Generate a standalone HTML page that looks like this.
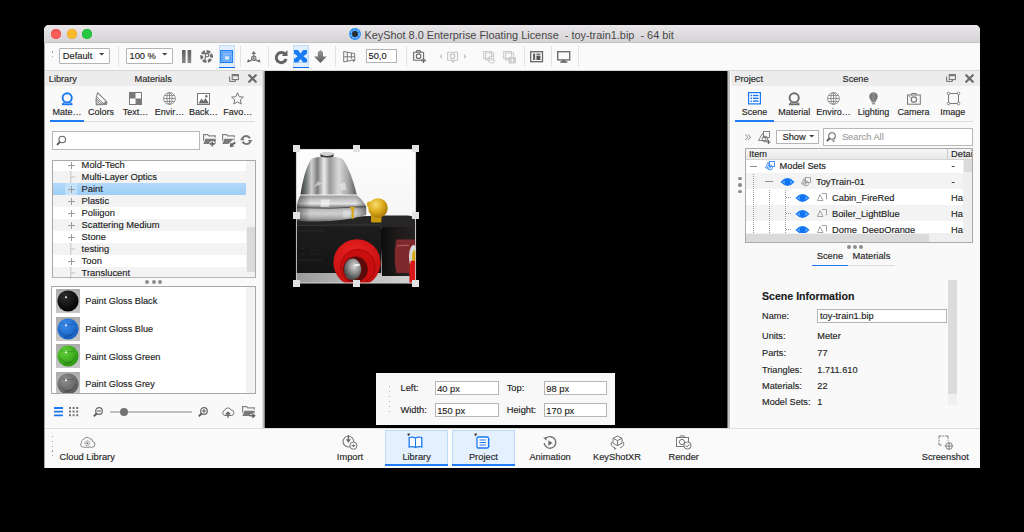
<!DOCTYPE html>
<html><head><meta charset="utf-8"><style>
*{box-sizing:border-box;margin:0;padding:0}
html,body{width:1024px;height:532px;background:#000;overflow:hidden;font-family:"Liberation Sans",sans-serif}
.a{position:absolute}
.t{position:absolute;white-space:nowrap;-webkit-text-stroke:0.15px currentColor}
svg{position:absolute;overflow:visible}
</style></head><body>
<div class="a" style="left:44px;top:25px;width:936px;height:443px;background:#f9f9f9;border-radius:5px 5px 0 0"></div>
<div class="a" style="left:44px;top:25px;width:936px;height:18px;background:linear-gradient(#e9e7e9,#d5d3d5);border-radius:5px 5px 0 0;border-bottom:1px solid #c3c1c3"></div>
<div class="a" style="left:50.5px;top:29.1px;width:10px;height:10px;background:#fc5c57;border-radius:50%;box-shadow:inset 0 0 0 0.5px #e0443e"></div>
<div class="a" style="left:66.6px;top:29.1px;width:10px;height:10px;background:#fdbc2e;border-radius:50%;box-shadow:inset 0 0 0 0.5px #dea123"></div>
<div class="a" style="left:82.3px;top:29.1px;width:10px;height:10px;background:#28c840;border-radius:50%;box-shadow:inset 0 0 0 0.5px #1aab29"></div>
<svg style="left:348.5px;top:28px;" width="12" height="12" viewBox="0 0 12 12"><circle cx="6" cy="6" r="5.9" fill="#1f87f2"/><circle cx="6" cy="6" r="4.1" fill="none" stroke="#7fc0ff" stroke-width="1.3" stroke-dasharray="2.4 1"/><circle cx="6" cy="6" r="2.9" fill="#2c2c2c"/></svg>
<div class="t" style="left:364.40px;top:29.77px;font-size:10.9px;line-height:10.9px;color:#474747;-webkit-text-stroke:0">KeyShot 8.0 Enterprise Floating License&nbsp; - toy-train1.bip&nbsp; - 64 bit</div>
<div class="a" style="left:44px;top:43px;width:936px;height:28px;background:#fafafa;border-bottom:1px solid #d8d8d8"></div>
<div class="a" style="left:51.8px;top:51.3px;width:1.3px;height:1.3px;background:#888;border-radius:50%"></div>
<div class="a" style="left:51.8px;top:56px;width:1.3px;height:1.3px;background:#888;border-radius:50%"></div>
<div class="a" style="left:59px;top:48.3px;width:50.8px;height:15.4px;background:#fff;border:1px solid #b4b4b4;border-radius:1px"></div>
<div class="t" style="left:62.80px;top:51.63px;font-size:9.3px;line-height:9.3px;color:#1e1e1e;">Default</div>
<svg style="left:99.3px;top:52.8px;" width="6" height="3" viewBox="0 0 6 3"><path d="M0 0h5.4L2.7 2.6z" fill="#444"/></svg>
<div class="a" style="left:118px;top:46px;width:1px;height:21px;background:#e3e3e3;"></div>
<div class="a" style="left:240px;top:46px;width:1px;height:21px;background:#e3e3e3;"></div>
<div class="a" style="left:267.6px;top:46px;width:1px;height:21px;background:#e3e3e3;"></div>
<div class="a" style="left:334.5px;top:46px;width:1px;height:21px;background:#e3e3e3;"></div>
<div class="a" style="left:406px;top:46px;width:1px;height:21px;background:#e3e3e3;"></div>
<div class="a" style="left:523.6px;top:46px;width:1px;height:21px;background:#e3e3e3;"></div>
<div class="a" style="left:550.6px;top:46px;width:1px;height:21px;background:#e3e3e3;"></div>
<div class="a" style="left:577.6px;top:46px;width:1px;height:21px;background:#e3e3e3;"></div>
<div class="a" style="left:126.2px;top:48.3px;width:46.4px;height:15.4px;background:#fff;border:1px solid #b4b4b4;border-radius:1px"></div>
<div class="t" style="left:129.50px;top:51.63px;font-size:9.3px;line-height:9.3px;color:#1e1e1e;">100 %</div>
<svg style="left:162.1px;top:52.8px;" width="6" height="3" viewBox="0 0 6 3"><path d="M0 0h5.4L2.7 2.6z" fill="#444"/></svg>
<svg style="left:182px;top:49.9px;" width="10" height="13.1" viewBox="0 0 10 13.1"><defs><linearGradient id="pg" x1="0" x2="0" y1="0" y2="1"><stop offset="0" stop-color="#5e5e5e"/><stop offset="1" stop-color="#8a8a8a"/></linearGradient></defs><rect x="0" y="0" width="3.6" height="13.1" fill="url(#pg)"/><rect x="5.6" y="0" width="3.6" height="13.1" fill="url(#pg)"/></svg>
<svg style="left:200.2px;top:49.8px;" width="13" height="13" viewBox="0 0 13 13"><g transform="translate(6.5 6.5)"><path d="M0 -6.4 A6.4 6.4 0 0 1 4.6 -4.45 L2.2 -2.6 A3.6 3.6 0 0 0 0 -3.6z" fill="#707070" transform="rotate(0)"/><path d="M0 -6.4 A6.4 6.4 0 0 1 4.6 -4.45 L2.2 -2.6 A3.6 3.6 0 0 0 0 -3.6z" fill="#707070" transform="rotate(60)"/><path d="M0 -6.4 A6.4 6.4 0 0 1 4.6 -4.45 L2.2 -2.6 A3.6 3.6 0 0 0 0 -3.6z" fill="#707070" transform="rotate(120)"/><path d="M0 -6.4 A6.4 6.4 0 0 1 4.6 -4.45 L2.2 -2.6 A3.6 3.6 0 0 0 0 -3.6z" fill="#707070" transform="rotate(180)"/><path d="M0 -6.4 A6.4 6.4 0 0 1 4.6 -4.45 L2.2 -2.6 A3.6 3.6 0 0 0 0 -3.6z" fill="#707070" transform="rotate(240)"/><path d="M0 -6.4 A6.4 6.4 0 0 1 4.6 -4.45 L2.2 -2.6 A3.6 3.6 0 0 0 0 -3.6z" fill="#707070" transform="rotate(300)"/></g><path d="M5.3 9.6V3.6h1.9a1.55 1.55 0 0 1 0 3.1H5.3" fill="none" stroke="#6a6a6a" stroke-width="1.1"/></svg>
<div class="a" style="left:218.7px;top:45.2px;width:16.4px;height:22.8px;background:#e2eefd;border:1px solid #c6ddfb;border-bottom:none"></div>
<div class="a" style="left:218.7px;top:66.8px;width:16.4px;height:1.4px;background:#0a6ef5;"></div>
<svg style="left:220px;top:49.9px;" width="13.1" height="13.1" viewBox="0 0 13.1 13.1"><rect x="0.6" y="0.6" width="11.9" height="11.9" fill="#84bafa" stroke="#1f80f6" stroke-width="1.1"/><path d="M2.3 2.3h8.5v8.5h-8.5z" fill="none" stroke="#2e88f6" stroke-width="0.8" stroke-dasharray="0.9 0.7"/><path d="M1.5 4.5l2 2M9.5 4.5l-2 2M1.5 10l2-2M11 10l-2-2" stroke="#2e88f6" stroke-width="0.6"/><rect x="4.6" y="5.9" width="4.8" height="4.2" rx="0.8" fill="#dcebfd" stroke="#4a98f7" stroke-width="0.6"/></svg>
<svg style="left:246.8px;top:50.5px;" width="13.5" height="12" viewBox="0 0 13.5 12"><g stroke="#777" stroke-width="1.1" fill="none"><path d="M6.75 2v5.5M6.75 7.5l-4.6 3M6.75 7.5l4.6 3"/><circle cx="6.75" cy="7.3" r="2.2"/></g><path d="M6.75 0l2.3 3h-4.6z M0 11.6l1-3.6 2.6 2.6z M13.5 11.6l-1-3.6-2.6 2.6z" fill="#6e6e6e"/></svg>
<svg style="left:274.5px;top:50.5px;" width="12.5" height="12.5" viewBox="0 0 12.5 12.5"><path d="M10.2 3.5A5 5 0 1 0 11.1 8" fill="none" stroke="#656565" stroke-width="3"/><path d="M6.8 5h5.7V-0.7z" fill="#656565"/></svg>
<div class="a" style="left:292.8px;top:45.2px;width:16.2px;height:22.8px;background:#e2eefd;border:1px solid #c6ddfb;border-bottom:none"></div>
<div class="a" style="left:292.8px;top:66.8px;width:16.2px;height:1.4px;background:#0a6ef5;"></div>
<svg style="left:294px;top:49.7px;" width="13.1" height="12.5" viewBox="0 0 13.1 12.5"><path d="M0 0H13.1V12.5H0z M6.55 1.2L4.3 0H8.8z" fill="#1a7bf6"/><path d="M3.9 0L6.55 3.6 9.2 0z M3.9 12.5L6.55 8.9 9.2 12.5z M0 3.6L3.7 6.25 0 8.9z M13.1 3.6L9.4 6.25 13.1 8.9z" fill="#e2eefd"/></svg>
<svg style="left:313.9px;top:50px;" width="12.8" height="13" viewBox="0 0 12.8 13"><defs><linearGradient id="dag" x1="0" x2="0" y1="0" y2="1"><stop offset="0" stop-color="#9a9a9a"/><stop offset="1" stop-color="#5c5c5c"/></linearGradient></defs><path d="M6.4 0L9 2.2V6.6H12.8L6.4 13 0 6.6H3.8V2.2z" fill="url(#dag)"/></svg>
<svg style="left:342.8px;top:50.5px;" width="14" height="12" viewBox="0 0 14 12"><g fill="none" stroke="#7a7a7a" stroke-width="1"><path d="M0.7 0.5L11.7 2.6V8.8L0.7 10.9z"/><path d="M4.3 1.2V10.2M8.4 2V9.4M0.7 5.8H11.7"/></g><path d="M8 8.2h5.6L10.8 11.4z" fill="#666" stroke="#fafafa" stroke-width="0.7"/></svg>
<div class="a" style="left:366.2px;top:49.3px;width:31.3px;height:14px;background:#fff;border:1px solid #b4b4b4"></div>
<div class="t" style="left:368.50px;top:52.13px;font-size:9.3px;line-height:9.3px;color:#1e1e1e;">50,0</div>
<svg style="left:412.5px;top:50px;" width="13.5" height="13" viewBox="0 0 13.5 13"><g fill="none" stroke="#6a6a6a" stroke-width="1.1"><rect x="0.6" y="2.2" width="10" height="8" rx="0.5"/><circle cx="5.6" cy="6.2" r="2.3"/><path d="M3 2.2l1-1.6h3l1 1.6"/></g><path d="M10.5 8v5M8 10.5h5" stroke="#6a6a6a" stroke-width="1.4"/></svg>
<svg style="left:437.5px;top:50px;" width="30" height="13" viewBox="0 0 30 13"><path d="M4 4l-2.6 2.5L4 9z M26 4l2.6 2.5L26 9z" fill="#c8c8c8"/><g fill="none" stroke="#c6c6c6" stroke-width="1.1"><rect x="9.6" y="2.2" width="10" height="8" rx="0.5"/><circle cx="14.6" cy="6.2" r="2.3"/></g><path d="M12.5 10.5h5l-2.5 2.5z" fill="#c8c8c8"/></svg>
<svg style="left:483px;top:50px;" width="14" height="14" viewBox="0 0 14 14"><g fill="none" stroke="#cdcdcd" stroke-width="1.1"><rect x="0.6" y="1.5" width="8" height="7"/><rect x="2.6" y="3" width="8" height="7"/><path d="M12 10a3.5 3.5 0 1 1-1-3"/></g></svg>
<svg style="left:502.8px;top:50px;" width="14" height="14" viewBox="0 0 14 14"><g fill="none" stroke="#cdcdcd" stroke-width="1.1"><rect x="0.6" y="1.5" width="8" height="7"/><rect x="2.6" y="3" width="8" height="7"/></g><rect x="5.5" y="7" width="7.5" height="6.5" fill="#cdcdcd"/><rect x="8.6" y="9" width="1.4" height="3" fill="#f7f7f7"/></svg>
<svg style="left:530px;top:50.5px;" width="13.2" height="11.5" viewBox="0 0 13.2 11.5"><rect x="0.7" y="0.7" width="11.8" height="10" fill="none" stroke="#666" stroke-width="1.3"/><rect x="3" y="2.5" width="2.2" height="6.5" fill="#666"/><rect x="6.4" y="2.5" width="4" height="2" fill="#777"/><rect x="6.4" y="5" width="4" height="4" fill="#555"/></svg>
<svg style="left:557px;top:50.5px;" width="13.5" height="12" viewBox="0 0 13.5 12"><rect x="0.7" y="0.7" width="12" height="8.2" fill="none" stroke="#666" stroke-width="1.3"/><rect x="5.2" y="9" width="3" height="1.5" fill="#666"/><rect x="3.3" y="10.3" width="7" height="1.4" fill="#555"/></svg>
<div class="a" style="left:44px;top:71px;width:221px;height:357px;background:#f9f9f9;"></div>
<div class="a" style="left:262px;top:71px;width:1px;height:357px;background:#dcdcdc;"></div>
<div class="a" style="left:263px;top:71px;width:1px;height:357px;background:#bdbdbd;"></div>
<div class="a" style="left:264px;top:71px;width:1px;height:357px;background:#8a8a8a;"></div>
<div class="a" style="left:44px;top:71px;width:218px;height:15px;background:#ececec;"></div>
<div class="t" style="left:48.80px;top:74.61px;font-size:9.2px;line-height:9.2px;color:#2a2a2a;">Library</div>
<div class="t" style="left:134.60px;top:74.61px;font-size:9.2px;line-height:9.2px;color:#2a2a2a;">Materials</div>
<svg style="left:229px;top:73.7px;" width="10" height="8" viewBox="0 0 10 8"><g fill="none" stroke="#6e6e6e" stroke-width="1"><rect x="3.2" y="0.6" width="6.2" height="5"/><path d="M0.6 2.6V7.4H6.4V5.6"/></g><rect x="3.2" y="0.6" width="6.2" height="1.6" fill="#777"/></svg>
<svg style="left:247.5px;top:73.89999999999999px;" width="9" height="9" viewBox="0 0 9 9"><path d="M1.2 1.2l6.6 6.6M7.8 1.2l-6.6 6.6" stroke="#6a6a6a" stroke-width="2.2" stroke-linecap="round"/></svg>
<svg style="left:60.5px;top:92px;" width="13" height="13" viewBox="0 0 13 13"><circle cx="6.2" cy="5.8" r="4.6" fill="none" stroke="#1a78f2" stroke-width="1.9"/><path d="M1 12.3h10.5" stroke="#1a78f2" stroke-width="1.8"/><path d="M3 10.5l-1 1.8M9.5 10.5l1 1.8" stroke="#1a78f2" stroke-width="1.5"/></svg>
<svg style="left:95px;top:91.8px;" width="13" height="13.5" viewBox="0 0 13 13.5"><path d="M2.7 0.4L11.8 9.6V12.4L1.2 13Q0 6 2.7 0.4z" fill="#8a8a8a"/><path d="M3.1 1.9L10.4 9.2 8.6 11 1.3 3.7z" fill="#fff"/><path d="M1.1 5.2L7.5 11.2M0.9 7.6L5.8 11.6M0.9 9.9L4 12.2" stroke="#fff" stroke-width="0.9"/><path d="M2.7 0.4L11.8 9.6V12.4L1.2 13Q0 6 2.7 0.4z" fill="none" stroke="#777" stroke-width="0.8"/></svg>
<svg style="left:129px;top:92px;" width="13" height="13" viewBox="0 0 13 13"><rect x="0.5" y="0.5" width="12" height="12" fill="#fff" stroke="#7a7a7a" stroke-width="1"/><rect x="0.5" y="0.5" width="6" height="6" fill="#7a7a7a"/><rect x="6.5" y="6.5" width="6" height="6" fill="#7a7a7a"/></svg>
<svg style="left:163px;top:92px;" width="13" height="13" viewBox="0 0 13 13"><g fill="none" stroke="#8a8a8a" stroke-width="0.9"><circle cx="6.5" cy="6.5" r="5.9"/><ellipse cx="6.5" cy="6.5" rx="2.6" ry="5.9"/><path d="M6.5 0.6v11.8M0.6 6.5h11.8M1.5 3.5h10M1.5 9.5h10"/></g></svg>
<svg style="left:197px;top:92.5px;" width="13" height="12" viewBox="0 0 13 12"><rect x="0.5" y="0.5" width="12" height="11" fill="#fff" stroke="#777" stroke-width="1"/><path d="M1.5 10.5L4.5 5.5l2 2.5 2-3 3.5 5.5z" fill="#6a6a6a"/><circle cx="9.3" cy="3.3" r="1.2" fill="#6a6a6a"/></svg>
<svg style="left:231px;top:91.5px;" width="13" height="13" viewBox="0 0 13 13"><path d="M6.5 0.8l1.75 3.9 4.15 0.4-3.1 2.8 0.9 4.1-3.7-2.15-3.7 2.15 0.9-4.1-3.1-2.8 4.15-0.4z" fill="none" stroke="#777" stroke-width="1"/></svg>
<div class="t" style="left:7.00px;width:120px;text-align:center;top:107.88px;font-size:9px;line-height:9px;color:#262626;">Mate…</div>
<div class="t" style="left:41.00px;width:120px;text-align:center;top:107.88px;font-size:9px;line-height:9px;color:#262626;">Colors</div>
<div class="t" style="left:75.50px;width:120px;text-align:center;top:107.88px;font-size:9px;line-height:9px;color:#262626;">Text…</div>
<div class="t" style="left:109.50px;width:120px;text-align:center;top:107.88px;font-size:9px;line-height:9px;color:#262626;">Envir…</div>
<div class="t" style="left:143.60px;width:120px;text-align:center;top:107.88px;font-size:9px;line-height:9px;color:#262626;">Back…</div>
<div class="t" style="left:177.80px;width:120px;text-align:center;top:107.88px;font-size:9px;line-height:9px;color:#262626;">Favo…</div>
<div class="a" style="left:50px;top:120.6px;width:205px;height:1px;background:#dcdcdc;"></div>
<div class="a" style="left:50px;top:120.1px;width:34.2px;height:2px;background:#1f7cf5;"></div>
<div class="a" style="left:52.2px;top:131px;width:147.5px;height:18.5px;background:#fff;border:1px solid #b8b8b8"></div>
<svg style="left:55.5px;top:134.5px;" width="11" height="11" viewBox="0 0 11 11"><circle cx="6.2" cy="4.5" r="3.3" fill="none" stroke="#666" stroke-width="1.1"/><path d="M4 6.8L1 9.8" stroke="#555" stroke-width="1.8"/></svg>
<svg style="left:203.3px;top:133.5px;" width="13" height="13" viewBox="0 0 13 13"><path d="M0.6 6.8V0.6h4.1l1 1.3h6.6v1.6" stroke="#858585" stroke-width="1.2" fill="none"/><path d="M2.4 4.7h10.3v5.4H0.4z" fill="#7a7a7a"/><path d="M9.3 7v5.8M6.4 9.9h5.8" stroke="#fafafa" stroke-width="3.4"/><path d="M9.3 7.4v5.2M6.7 9.9h5.2" stroke="#6a6a6a" stroke-width="1.7"/></svg>
<svg style="left:222px;top:133.5px;" width="13" height="13" viewBox="0 0 13 13"><path d="M0.6 6.8V0.6h4.1l1 1.3h6.6v1.6" stroke="#858585" stroke-width="1.2" fill="none"/><path d="M2.4 4.7h10.3v5.4H0.4z" fill="#7a7a7a"/><path d="M12.6 6.5L8.6 10.2 12 12.8" stroke="#fafafa" stroke-width="3.4" fill="none"/><path d="M12.8 7.4L9.8 9.6l-1.5-1.2-0.6 4.8 4.6-0.6-1.4-1.2 2.9-2.2z" fill="#6a6a6a"/></svg>
<svg style="left:240.2px;top:135px;" width="12.5" height="10.2" viewBox="0 0 12.5 10.2"><path d="M10 3.4A4.4 4.4 0 0 0 2.3 3.2M2.5 6.8A4.4 4.4 0 0 0 10.2 7" fill="none" stroke="#747474" stroke-width="1.9"/><path d="M0 5.3L2.2 2.1 4.6 5.3z M12.5 4.9L10.3 8.1 7.9 4.9z" fill="#747474"/></svg>
<div class="a" style="left:51.5px;top:159.5px;width:204px;height:118.5px;background:#fff;border:1px solid #a9a9a9"></div>
<div class="a" style="left:52.5px;top:160.5px;width:193px;height:10.5px;background:#ffffff;"></div>
<svg style="left:67.5px;top:161.5px;" width="7" height="7" viewBox="0 0 7 7"><path d="M3.5 0v7M0 3.5h7" stroke="#9c9c9c" stroke-width="1"/></svg>
<div class="t" style="left:81.60px;top:160.59px;font-size:9.35px;line-height:9.35px;color:#1e1e1e;">Mold-Tech</div>
<div class="a" style="left:52.5px;top:171px;width:193px;height:12px;background:#f3f3f3;"></div>
<svg style="left:70.2px;top:171px;" width="6" height="12" viewBox="0 0 6 12"><path d="M0.8 0v12M0.8 6h4.5" stroke="#c4c4c4" stroke-width="1"/></svg>
<div class="t" style="left:81.60px;top:172.59px;font-size:9.35px;line-height:9.35px;color:#1e1e1e;">Multi-Layer Optics</div>
<div class="a" style="left:52.5px;top:183px;width:193px;height:12px;background:linear-gradient(#b3d9fa,#9fcdf6);"></div>
<div class="a" style="left:64.5px;top:183px;width:12px;height:12px;background:#c3e1fb;"></div>
<svg style="left:67.5px;top:185.5px;" width="7" height="7" viewBox="0 0 7 7"><path d="M3.5 0v7M0 3.5h7" stroke="#9c9c9c" stroke-width="1"/></svg>
<div class="t" style="left:81.60px;top:184.59px;font-size:9.35px;line-height:9.35px;color:#1e1e1e;">Paint</div>
<div class="a" style="left:52.5px;top:195px;width:193px;height:12px;background:#f3f3f3;"></div>
<svg style="left:67.5px;top:197.5px;" width="7" height="7" viewBox="0 0 7 7"><path d="M3.5 0v7M0 3.5h7" stroke="#9c9c9c" stroke-width="1"/></svg>
<div class="t" style="left:81.60px;top:196.59px;font-size:9.35px;line-height:9.35px;color:#1e1e1e;">Plastic</div>
<div class="a" style="left:52.5px;top:207px;width:193px;height:12px;background:#ffffff;"></div>
<svg style="left:67.5px;top:209.5px;" width="7" height="7" viewBox="0 0 7 7"><path d="M3.5 0v7M0 3.5h7" stroke="#9c9c9c" stroke-width="1"/></svg>
<div class="t" style="left:81.60px;top:208.59px;font-size:9.35px;line-height:9.35px;color:#1e1e1e;">Poliigon</div>
<div class="a" style="left:52.5px;top:219px;width:193px;height:12px;background:#f3f3f3;"></div>
<svg style="left:67.5px;top:221.5px;" width="7" height="7" viewBox="0 0 7 7"><path d="M3.5 0v7M0 3.5h7" stroke="#9c9c9c" stroke-width="1"/></svg>
<div class="t" style="left:81.60px;top:220.59px;font-size:9.35px;line-height:9.35px;color:#1e1e1e;">Scattering Medium</div>
<div class="a" style="left:52.5px;top:231px;width:193px;height:12px;background:#ffffff;"></div>
<svg style="left:67.5px;top:233.5px;" width="7" height="7" viewBox="0 0 7 7"><path d="M3.5 0v7M0 3.5h7" stroke="#9c9c9c" stroke-width="1"/></svg>
<div class="t" style="left:81.60px;top:232.59px;font-size:9.35px;line-height:9.35px;color:#1e1e1e;">Stone</div>
<div class="a" style="left:52.5px;top:243px;width:193px;height:12px;background:#f3f3f3;"></div>
<svg style="left:70.2px;top:243px;" width="6" height="12" viewBox="0 0 6 12"><path d="M0.8 0v12M0.8 6h4.5" stroke="#c4c4c4" stroke-width="1"/></svg>
<div class="t" style="left:81.60px;top:244.59px;font-size:9.35px;line-height:9.35px;color:#1e1e1e;">testing</div>
<div class="a" style="left:52.5px;top:255px;width:193px;height:12px;background:#ffffff;"></div>
<svg style="left:67.5px;top:257.5px;" width="7" height="7" viewBox="0 0 7 7"><path d="M3.5 0v7M0 3.5h7" stroke="#9c9c9c" stroke-width="1"/></svg>
<div class="t" style="left:81.60px;top:256.59px;font-size:9.35px;line-height:9.35px;color:#1e1e1e;">Toon</div>
<div class="a" style="left:52.5px;top:267px;width:193px;height:10.5px;background:#f3f3f3;"></div>
<svg style="left:70.2px;top:267px;" width="6" height="12" viewBox="0 0 6 12"><path d="M0.8 0v12M0.8 6h4.5" stroke="#c4c4c4" stroke-width="1"/></svg>
<div class="t" style="left:81.60px;top:268.59px;font-size:9.35px;line-height:9.35px;color:#1e1e1e;">Translucent</div>
<div class="a" style="left:245.6px;top:160.5px;width:9px;height:117px;background:#f2f2f2;"></div>
<div class="a" style="left:246.5px;top:227px;width:8px;height:45.3px;background:#dadada;"></div>
<div class="a" style="left:51.5px;top:277px;width:204px;height:1.2px;background:#b4b4b4;"></div>
<div class="a" style="left:145.4px;top:280.4px;width:4px;height:4px;background:#8e8e8e;border-radius:50%"></div>
<div class="a" style="left:151.6px;top:280.4px;width:4px;height:4px;background:#8e8e8e;border-radius:50%"></div>
<div class="a" style="left:157.79999999999998px;top:280.4px;width:4px;height:4px;background:#8e8e8e;border-radius:50%"></div>
<div class="a" style="left:51px;top:286.2px;width:204.6px;height:107.5px;background:#fff;border:1px solid #a9a9a9"></div>
<div class="a" style="left:246px;top:287.2px;width:9px;height:105.5px;background:#f2f2f2;"></div>
<svg style="left:56px;top:288.9px;" width="24" height="24" viewBox="0 0 24 24"><defs><radialGradient id="sg0" cx="0.35" cy="0.3" r="0.7"><stop offset="0" stop-color="#2e2e2e"/><stop offset="1" stop-color="#050505"/></radialGradient><linearGradient id="bg0" x1="0" x2="0" y1="0" y2="1"><stop offset="0" stop-color="#ababab"/><stop offset="1" stop-color="#c8c8c8"/></linearGradient></defs><rect width="24" height="24" fill="url(#bg0)"/><circle cx="12" cy="12" r="10.6" fill="url(#sg0)"/><path d="M3.5 13q4 7 12 5M8 20q8 0 12-8M5 6q5 3 13 1" stroke="#000" stroke-width="0.8" fill="none" opacity="0.25"/><circle cx="10" cy="8.3" r="1" fill="#fff"/></svg>
<div class="t" style="left:85.30px;top:297.21px;font-size:9.2px;line-height:9.2px;color:#1e1e1e;">Paint Gloss Black</div>
<svg style="left:56px;top:316.59999999999997px;" width="24" height="24" viewBox="0 0 24 24"><defs><radialGradient id="sg1" cx="0.35" cy="0.3" r="0.7"><stop offset="0" stop-color="#3a8ae8"/><stop offset="1" stop-color="#1660c4"/></radialGradient><linearGradient id="bg1" x1="0" x2="0" y1="0" y2="1"><stop offset="0" stop-color="#ababab"/><stop offset="1" stop-color="#c8c8c8"/></linearGradient></defs><rect width="24" height="24" fill="url(#bg1)"/><circle cx="12" cy="12" r="10.6" fill="url(#sg1)"/><path d="M3.5 13q4 7 12 5M8 20q8 0 12-8M5 6q5 3 13 1" stroke="#000" stroke-width="0.8" fill="none" opacity="0.25"/><circle cx="10" cy="8.3" r="1" fill="#fff"/></svg>
<div class="t" style="left:85.30px;top:324.91px;font-size:9.2px;line-height:9.2px;color:#1e1e1e;">Paint Gloss Blue</div>
<svg style="left:56px;top:344.29999999999995px;" width="24" height="24" viewBox="0 0 24 24"><defs><radialGradient id="sg2" cx="0.35" cy="0.3" r="0.7"><stop offset="0" stop-color="#62d03a"/><stop offset="1" stop-color="#2e9a14"/></radialGradient><linearGradient id="bg2" x1="0" x2="0" y1="0" y2="1"><stop offset="0" stop-color="#ababab"/><stop offset="1" stop-color="#c8c8c8"/></linearGradient></defs><rect width="24" height="24" fill="url(#bg2)"/><circle cx="12" cy="12" r="10.6" fill="url(#sg2)"/><path d="M3.5 13q4 7 12 5M8 20q8 0 12-8M5 6q5 3 13 1" stroke="#000" stroke-width="0.8" fill="none" opacity="0.25"/><circle cx="10" cy="8.3" r="1" fill="#fff"/></svg>
<div class="t" style="left:85.30px;top:352.61px;font-size:9.2px;line-height:9.2px;color:#1e1e1e;">Paint Gloss Green</div>
<svg style="left:56px;top:372.0px;" width="24" height="24" viewBox="0 0 24 24"><defs><radialGradient id="sg3" cx="0.35" cy="0.3" r="0.7"><stop offset="0" stop-color="#8e8e8e"/><stop offset="1" stop-color="#5c5c5c"/></radialGradient><linearGradient id="bg3" x1="0" x2="0" y1="0" y2="1"><stop offset="0" stop-color="#ababab"/><stop offset="1" stop-color="#c8c8c8"/></linearGradient></defs><rect width="24" height="24" fill="url(#bg3)"/><circle cx="12" cy="12" r="10.6" fill="url(#sg3)"/><path d="M3.5 13q4 7 12 5M8 20q8 0 12-8M5 6q5 3 13 1" stroke="#000" stroke-width="0.8" fill="none" opacity="0.25"/><circle cx="10" cy="8.3" r="1" fill="#fff"/></svg>
<div class="t" style="left:85.30px;top:380.31px;font-size:9.2px;line-height:9.2px;color:#1e1e1e;">Paint Gloss Grey</div>
<div class="a" style="left:50px;top:393.7px;width:210px;height:8px;background:#f9f9f9;"></div>
<div class="a" style="left:51px;top:392.7px;width:204.6px;height:1px;background:#a9a9a9;"></div>
<svg style="left:53.5px;top:407px;" width="9" height="9.5" viewBox="0 0 9 9.5"><path d="M0 1h9M0 4.7h9M0 8.4h9" stroke="#1a78f2" stroke-width="1.8"/></svg>
<svg style="left:68.5px;top:407px;" width="10" height="10" viewBox="0 0 10 10"><g fill="#777"><rect x="0" y="0" width="2" height="2"/><rect x="0" y="3.6" width="2" height="2"/><rect x="0" y="7.2" width="2" height="2"/><rect x="3.6" y="0" width="2" height="2"/><rect x="3.6" y="3.6" width="2" height="2"/><rect x="3.6" y="7.2" width="2" height="2"/><rect x="7.2" y="0" width="2" height="2"/><rect x="7.2" y="3.6" width="2" height="2"/><rect x="7.2" y="7.2" width="2" height="2"/></g></svg>
<svg style="left:93.2px;top:407px;" width="10" height="10" viewBox="0 0 10 10"><circle cx="6" cy="4" r="3.3" fill="none" stroke="#666" stroke-width="1.2"/><path d="M4 4h4" stroke="#666" stroke-width="1.1"/><path d="M3.6 6.5L0.8 9.3" stroke="#555" stroke-width="1.8"/></svg>
<div class="a" style="left:109.5px;top:411.2px;width:82.5px;height:1.7px;background:#bfbfbf;"></div>
<div class="a" style="left:119.6px;top:407.7px;width:8.6px;height:8.6px;background:#737373;border-radius:50%"></div>
<svg style="left:198px;top:407px;" width="10" height="10" viewBox="0 0 10 10"><circle cx="6" cy="4" r="3.3" fill="none" stroke="#666" stroke-width="1.2"/><path d="M4 4h4M6 2v4" stroke="#666" stroke-width="1.1"/><path d="M3.6 6.5L0.8 9.3" stroke="#555" stroke-width="1.8"/></svg>
<svg style="left:221.5px;top:406.5px;" width="12" height="11" viewBox="0 0 12 11"><path d="M3 8.5A2.7 2.7 0 0 1 2.8 3.2 3.3 3.3 0 0 1 9 3 2.7 2.7 0 0 1 9.3 8.5z" fill="none" stroke="#777" stroke-width="1"/><path d="M6 10.8V5.5M3.8 7.5L6 5.2 8.2 7.5" stroke="#666" stroke-width="1.4" fill="none"/></svg>
<svg style="left:242px;top:405.8px;" width="13" height="13" viewBox="0 0 13 13"><path d="M0.6 6.8V0.6h4.1l1 1.3h6.6v1.6" stroke="#858585" stroke-width="1.2" fill="none"/><path d="M2.4 4.7h10.3v5.4H0.4z" fill="#7a7a7a"/><path d="M8 9.8h4.8M10.6 7.6l2.3 2.2-2.3 2.2" stroke="#fafafa" stroke-width="3" fill="none"/><path d="M7.5 9.8h4.6M10.4 7.8l2.2 2-2.2 2" stroke="#666" stroke-width="1.5" fill="none"/></svg>
<div class="a" style="left:265px;top:71px;width:462px;height:357px;background:#000;"></div>
<svg style="left:296px;top:148.5px;" width="120" height="134.3" viewBox="0 0 120 134.3"><defs>
<clipPath id="ic"><rect width="120" height="134.3"/></clipPath>
<linearGradient id="ibg" x1="0" x2="0" y1="0" y2="1"><stop offset="0" stop-color="#fdfdfd"/><stop offset="0.5" stop-color="#f6f6f6"/><stop offset="1" stop-color="#e8e8e8"/></linearGradient>
<linearGradient id="bell" x1="0" x2="1" y1="0" y2="0"><stop offset="0" stop-color="#3a3a3a"/><stop offset="0.1" stop-color="#6e7670"/><stop offset="0.2" stop-color="#d0d0d0"/><stop offset="0.3" stop-color="#7c7c7c"/><stop offset="0.42" stop-color="#ececec"/><stop offset="0.52" stop-color="#9a9a9a"/><stop offset="0.68" stop-color="#dadada"/><stop offset="0.85" stop-color="#a4a4a4"/><stop offset="1" stop-color="#5c5c5c"/></linearGradient>
<linearGradient id="brim" x1="0" x2="0" y1="0" y2="1"><stop offset="0" stop-color="#9a9a9a"/><stop offset="0.18" stop-color="#c8c8c8"/><stop offset="0.32" stop-color="#e4e4e4"/><stop offset="0.44" stop-color="#8a8a8a"/><stop offset="0.52" stop-color="#b8b8b8"/><stop offset="0.7" stop-color="#d0d0d0"/><stop offset="0.88" stop-color="#a8a8a8"/><stop offset="1" stop-color="#6a6a6a"/></linearGradient>
<linearGradient id="brimx" x1="0" x2="1" y1="0" y2="0"><stop offset="0" stop-color="#000" stop-opacity="0.45"/><stop offset="0.2" stop-color="#000" stop-opacity="0"/><stop offset="0.85" stop-color="#000" stop-opacity="0"/><stop offset="1" stop-color="#000" stop-opacity="0.4"/></linearGradient>
<linearGradient id="front" x1="0" x2="0" y1="0" y2="1"><stop offset="0" stop-color="#2a2a2a"/><stop offset="0.15" stop-color="#1c1c1c"/><stop offset="1" stop-color="#141414"/></linearGradient>
<linearGradient id="side" x1="0" x2="1" y1="0" y2="0"><stop offset="0" stop-color="#0c0c0c"/><stop offset="0.5" stop-color="#1e1a1a"/><stop offset="1" stop-color="#262222"/></linearGradient>
<linearGradient id="gnd" x1="0" x2="1" y1="0" y2="0"><stop offset="0" stop-color="#9a9a9a"/><stop offset="0.5" stop-color="#b8b8b8"/><stop offset="1" stop-color="#d4d4d4"/></linearGradient>
<radialGradient id="knob" cx="0.38" cy="0.32" r="0.7"><stop offset="0" stop-color="#f8dc70"/><stop offset="0.5" stop-color="#e0b020"/><stop offset="1" stop-color="#a87808"/></radialGradient>
<radialGradient id="hub" cx="0.6" cy="0.35" r="0.75"><stop offset="0" stop-color="#d8d8d8"/><stop offset="0.45" stop-color="#8c8c8c"/><stop offset="0.8" stop-color="#4a4a4a"/><stop offset="1" stop-color="#8a8a8a"/></radialGradient>
<radialGradient id="red1" cx="0.45" cy="0.35" r="0.7"><stop offset="0" stop-color="#ee2424"/><stop offset="1" stop-color="#c00c0c"/></radialGradient>
</defs>
<g clip-path="url(#ic)">
<rect width="120" height="134.3" fill="url(#ibg)"/>
<rect x="0" y="118" width="120" height="17" fill="url(#gnd)"/>
<path d="M84 70 L112 68.5 Q119 69 119.5 75 L119.5 127 L86 127 z" fill="url(#side)"/>
<path d="M0 71 L78 71 Q85 72 85 80 L85 124 L0 124 z" fill="url(#front)"/>
<path d="M0 70 L84 66.5 L112 66.5 Q119 67 119.5 72 L119.5 78 L84 78 L0 77z" fill="#262626"/>
<path d="M0 76.5 L84 75.5 Q86 76 86 80" stroke="#3a3a3a" stroke-width="0.8" fill="none"/>
<path d="M2 82h26M2 111h24" stroke="#2c2c2c" stroke-width="0.8"/>
<text x="1.5" y="105" font-family="Liberation Serif" font-size="15.5" fill="#0e0e0e" stroke="#262626" stroke-width="0.4">Bell</text>
<path d="M100.3 90.5 H120 V124 H100.3 Q97 107 100.3 90.5z" fill="#7e2a2c"/>
<path d="M101 97 q6 -1 12 -0.5" stroke="#c07070" stroke-width="1.2" fill="none" opacity="0.7"/>
<ellipse cx="117.5" cy="108" rx="4.5" ry="12" fill="#d8d8d8"/>
<ellipse cx="118.5" cy="108" rx="2.4" ry="7" fill="#d8a808"/>
<path d="M114.6 112 Q120 110 121 116 V135 H113.5 Q113 120 114.6 112z" fill="#d81818"/>
<ellipse cx="61" cy="113.8" rx="23.6" ry="23.6" fill="url(#red1)"/>
<ellipse cx="61.8" cy="117.6" rx="17.2" ry="17.2" fill="#c80e0e" stroke="#9a0808" stroke-width="0.8"/>
<ellipse cx="59.5" cy="120.3" rx="12.3" ry="12.8" fill="#5e0a0a"/>
<ellipse cx="56.6" cy="120.3" rx="8.7" ry="10.8" fill="url(#hub)"/>
<ellipse cx="61" cy="116" rx="3" ry="1" fill="#ffffff" opacity="0.9"/>
<path d="M14.5 11 Q16 7.6 31 7.4 Q46 7.6 47.5 11 Q55 22 60.8 45.5 L4.4 45.5 Q8 22 14.5 11z" fill="url(#bell)"/>
<path d="M18 38 l4 -6 l4 3z" fill="#f4f8ff" opacity="0.5"/>
<path d="M44 35 l5 -2 l2 8 l-6 0z" fill="#f8f8f8" opacity="0.45"/>
<path d="M24.5 4.5 Q31 2.5 37.5 4.5 V7.8 Q31 9.3 24.5 7.8z" fill="#3a3a3a"/>
<ellipse cx="31" cy="4.8" rx="6.3" ry="2.1" fill="#d4d4d4"/>
<path d="M4.4 46.5 L61 46.5 Q68 52 70.2 58 L70.2 66 Q50 72 20 72.5 Q5 72.5 0.5 71 L0.5 57 Q1.5 51 4.4 46.5z" fill="url(#brim)"/>
<path d="M4.4 46.5 L61 46.5 Q68 52 70.2 58 L70.2 66 Q50 72 20 72.5 Q5 72.5 0.5 71 L0.5 57 Q1.5 51 4.4 46.5z" fill="url(#brimx)"/>
<path d="M0.6 58.6 Q35 60.5 70 57.5" stroke="#4a4a4a" stroke-width="0.9" fill="none"/>
<path d="M25 50.5h9l-1 7.5h-8.5z" fill="#ffffff" opacity="0.55"/>
<path d="M47 61h7v7.5h-7z" fill="#ffffff" opacity="0.3"/>
<path d="M53.8 58h5.8l-1.8 3.2v8.5h-2.2v-8.5z" fill="#d8a818"/>
<rect x="75" y="63.5" width="10.4" height="10" rx="1.2" fill="#c8980e"/>
<circle cx="73.8" cy="55.6" r="3" fill="#dcae1a"/>
<circle cx="82" cy="59" r="9.8" fill="url(#knob)"/>
</g>
<rect x="0.4" y="0.4" width="119.2" height="133.5" fill="none" stroke="#d0d0d0" stroke-width="0.9"/>
</svg>
<div class="a" style="left:293.1px;top:145.1px;width:7px;height:7px;background:#e2e2e2;"></div>
<div class="a" style="left:293.1px;top:212.3px;width:7px;height:7px;background:#e2e2e2;"></div>
<div class="a" style="left:293.1px;top:279.5px;width:7px;height:7px;background:#e2e2e2;"></div>
<div class="a" style="left:352.8px;top:145.1px;width:7px;height:7px;background:#e2e2e2;"></div>
<div class="a" style="left:352.8px;top:279.5px;width:7px;height:7px;background:#e2e2e2;"></div>
<div class="a" style="left:412.2px;top:145.1px;width:7px;height:7px;background:#e2e2e2;"></div>
<div class="a" style="left:412.2px;top:212.3px;width:7px;height:7px;background:#e2e2e2;"></div>
<div class="a" style="left:412.2px;top:279.5px;width:7px;height:7px;background:#e2e2e2;"></div>
<div class="a" style="left:376px;top:373px;width:239px;height:52px;background:#f8f8f8;"></div>
<div class="a" style="left:388.9px;top:386.1px;width:1.2px;height:1.2px;background:#9c9c9c;border-radius:50%"></div>
<div class="a" style="left:388.9px;top:391.03000000000003px;width:1.2px;height:1.2px;background:#9c9c9c;border-radius:50%"></div>
<div class="a" style="left:388.9px;top:395.96000000000004px;width:1.2px;height:1.2px;background:#9c9c9c;border-radius:50%"></div>
<div class="a" style="left:388.9px;top:400.89000000000004px;width:1.2px;height:1.2px;background:#9c9c9c;border-radius:50%"></div>
<div class="a" style="left:388.9px;top:405.82000000000005px;width:1.2px;height:1.2px;background:#9c9c9c;border-radius:50%"></div>
<div class="a" style="left:388.9px;top:410.75px;width:1.2px;height:1.2px;background:#9c9c9c;border-radius:50%"></div>
<div class="t" style="left:400.50px;top:384.23px;font-size:9.3px;line-height:9.3px;color:#1e1e1e;">Left:</div>
<div class="t" style="left:400.50px;top:406.13px;font-size:9.3px;line-height:9.3px;color:#1e1e1e;">Width:</div>
<div class="t" style="left:506.70px;top:384.23px;font-size:9.3px;line-height:9.3px;color:#1e1e1e;">Top:</div>
<div class="t" style="left:506.70px;top:406.13px;font-size:9.3px;line-height:9.3px;color:#1e1e1e;">Height:</div>
<div class="a" style="left:434.7px;top:380.9px;width:64px;height:14px;background:#fff;border:1px solid #b6b6b6"></div>
<div class="t" style="left:437.20px;top:384.63px;font-size:9.3px;line-height:9.3px;color:#1e1e1e;">40 px</div>
<div class="a" style="left:434.7px;top:402.8px;width:64px;height:14.2px;background:#fff;border:1px solid #b6b6b6"></div>
<div class="t" style="left:437.20px;top:406.53px;font-size:9.3px;line-height:9.3px;color:#1e1e1e;">150 px</div>
<div class="a" style="left:543.8px;top:380.9px;width:63.5px;height:14px;background:#fff;border:1px solid #b6b6b6"></div>
<div class="t" style="left:546.30px;top:384.63px;font-size:9.3px;line-height:9.3px;color:#1e1e1e;">98 px</div>
<div class="a" style="left:543.8px;top:402.8px;width:63.5px;height:14.2px;background:#fff;border:1px solid #b6b6b6"></div>
<div class="t" style="left:546.30px;top:406.53px;font-size:9.3px;line-height:9.3px;color:#1e1e1e;">170 px</div>
<div class="a" style="left:727px;top:71px;width:253px;height:357px;background:#f9f9f9;"></div>
<div class="a" style="left:727px;top:71px;width:1px;height:357px;background:#6a6a6a;"></div>
<div class="a" style="left:728px;top:71px;width:2px;height:357px;background:#c4c4c4;"></div>
<div class="a" style="left:730px;top:71px;width:1px;height:357px;background:#ffffff;"></div>
<div class="a" style="left:731px;top:71px;width:249px;height:15px;background:#ececec;"></div>
<div class="t" style="left:734.40px;top:74.61px;font-size:9.2px;line-height:9.2px;color:#2a2a2a;">Project</div>
<div class="t" style="left:842.50px;top:74.61px;font-size:9.2px;line-height:9.2px;color:#2a2a2a;">Scene</div>
<svg style="left:946px;top:73.7px;" width="10" height="8" viewBox="0 0 10 8"><g fill="none" stroke="#6e6e6e" stroke-width="1"><rect x="3.2" y="0.6" width="6.2" height="5"/><path d="M0.6 2.6V7.4H6.4V5.6"/></g><rect x="3.2" y="0.6" width="6.2" height="1.6" fill="#777"/></svg>
<svg style="left:964.7px;top:73.89999999999999px;" width="9" height="9" viewBox="0 0 9 9"><path d="M1.2 1.2l6.6 6.6M7.8 1.2l-6.6 6.6" stroke="#6a6a6a" stroke-width="2.2" stroke-linecap="round"/></svg>
<svg style="left:748px;top:92.3px;" width="13" height="12.5" viewBox="0 0 13 12.5"><rect x="0.6" y="0.6" width="11.8" height="11.3" fill="#fff" stroke="#1a78f2" stroke-width="1.2"/><g fill="#1a78f2"><rect x="2.5" y="2.8" width="1.6" height="1.4"/><rect x="5" y="2.8" width="5.5" height="1.4"/><rect x="2.5" y="5.6" width="1.6" height="1.4"/><rect x="5" y="5.6" width="5.5" height="1.4"/><rect x="2.5" y="8.4" width="1.6" height="1.4"/><rect x="5" y="8.4" width="5.5" height="1.4"/></g></svg>
<svg style="left:788px;top:92px;" width="13" height="13" viewBox="0 0 13 13"><circle cx="6.2" cy="5.8" r="4.6" fill="none" stroke="#6d6d6d" stroke-width="1.9"/><path d="M1 12.3h10.5" stroke="#6d6d6d" stroke-width="1.8"/><path d="M3 10.5l-1 1.8M9.5 10.5l1 1.8" stroke="#6d6d6d" stroke-width="1.5"/></svg>
<svg style="left:827.2px;top:92px;" width="13" height="13" viewBox="0 0 13 13"><g fill="none" stroke="#8a8a8a" stroke-width="0.9"><circle cx="6.5" cy="6.5" r="5.9"/><ellipse cx="6.5" cy="6.5" rx="2.6" ry="5.9"/><path d="M6.5 0.6v11.8M0.6 6.5h11.8M1.5 3.5h10M1.5 9.5h10"/></g></svg>
<svg style="left:869px;top:92px;" width="9" height="13" viewBox="0 0 9 13"><defs><linearGradient id="bulb" x1="0" x2="1"><stop offset="0" stop-color="#6a6a6a"/><stop offset="0.5" stop-color="#8a8a8a"/><stop offset="1" stop-color="#6a6a6a"/></linearGradient></defs><path d="M4.5 0.3A4.2 4.2 0 0 1 8.7 4.5Q8.7 6.5 6.8 8.8L6.5 10.2H2.5L2.2 8.8Q0.3 6.5 0.3 4.5A4.2 4.2 0 0 1 4.5 0.3z" fill="url(#bulb)"/><path d="M2.8 10.6h3.4l-0.4 1.8H3.2z" fill="#999"/></svg>
<svg style="left:906.5px;top:92.5px;" width="14" height="12" viewBox="0 0 14 12"><g fill="none" stroke="#777" stroke-width="1"><rect x="0.5" y="2" width="12.8" height="9.2"/><circle cx="6.9" cy="6.6" r="2.7" stroke-width="1.2"/><path d="M4 2l0.6-1.5h4.6L9.8 2"/></g><rect x="2" y="3.3" width="1.3" height="1" fill="#777"/></svg>
<svg style="left:946.5px;top:92px;" width="13" height="13" viewBox="0 0 13 13"><rect x="1.5" y="1.5" width="10" height="10" fill="none" stroke="#7a7a7a" stroke-width="1"/><g fill="#fff" stroke="#7a7a7a" stroke-width="0.9"><circle cx="1.5" cy="1.5" r="1.3"/><circle cx="11.5" cy="1.5" r="1.3"/><circle cx="1.5" cy="11.5" r="1.3"/><circle cx="11.5" cy="11.5" r="1.3"/></g></svg>
<div class="t" style="left:694.40px;width:120px;text-align:center;top:107.88px;font-size:9px;line-height:9px;color:#262626;">Scene</div>
<div class="t" style="left:734.20px;width:120px;text-align:center;top:107.88px;font-size:9px;line-height:9px;color:#262626;">Material</div>
<div class="t" style="left:773.60px;width:120px;text-align:center;top:107.88px;font-size:9px;line-height:9px;color:#262626;">Enviro…</div>
<div class="t" style="left:813.50px;width:120px;text-align:center;top:107.88px;font-size:9px;line-height:9px;color:#262626;">Lighting</div>
<div class="t" style="left:853.50px;width:120px;text-align:center;top:107.88px;font-size:9px;line-height:9px;color:#262626;">Camera</div>
<div class="t" style="left:892.80px;width:120px;text-align:center;top:107.88px;font-size:9px;line-height:9px;color:#262626;">Image</div>
<div class="a" style="left:734.8px;top:120.6px;width:238.20000000000005px;height:1px;background:#dcdcdc;"></div>
<div class="a" style="left:734.8px;top:120.1px;width:39.60000000000002px;height:2px;background:#1f7cf5;"></div>
<svg style="left:745px;top:133.5px;" width="6" height="7" viewBox="0 0 6 7"><path d="M0.5 0.5l2.2 2.8-2.2 2.8M3.2 0.5l2.2 2.8-2.2 2.8" fill="none" stroke="#777" stroke-width="0.9"/></svg>
<svg style="left:757.8px;top:130.5px;" width="13" height="13" viewBox="0 0 13 13"><g fill="none" stroke="#777" stroke-width="0.9"><path d="M4.5 2.5L0.5 9.5h8z"/><rect x="5.5" y="0.5" width="6" height="6"/><circle cx="7" cy="8" r="2.8"/></g><path d="M10.5 9v4M8.5 11h4" stroke="#666" stroke-width="1.2"/></svg>
<div class="a" style="left:776px;top:129.6px;width:42.8px;height:14.1px;background:#fff;border:1px solid #b4b4b4"></div>
<div class="t" style="left:782.50px;top:133.13px;font-size:9.3px;line-height:9.3px;color:#1e1e1e;">Show</div>
<svg style="left:808.8px;top:134.7px;" width="6" height="3" viewBox="0 0 6 3"><path d="M0 0h5.4L2.7 2.6z" fill="#444"/></svg>
<div class="a" style="left:823.1px;top:128.4px;width:149.7px;height:17.2px;background:#fff;border:1px solid #b8b8b8"></div>
<svg style="left:826px;top:131.5px;" width="10" height="10" viewBox="0 0 10 10"><circle cx="6" cy="4" r="3.3" fill="none" stroke="#666" stroke-width="1.1"/><path d="M3.8 6.2L0.8 9.2" stroke="#555" stroke-width="1.7"/><path d="M5.5 8.5h4l-2 1.5z" fill="#666"/></svg>
<div class="t" style="left:841.90px;top:133.23px;font-size:9.3px;line-height:9.3px;color:#a0a0a0;">Search All</div>
<div class="a" style="left:744.5px;top:148px;width:228.3px;height:95px;background:#fff;border:1px solid #aaaaaa"></div>
<div class="a" style="left:745.5px;top:149px;width:226.3px;height:10.6px;background:linear-gradient(#f6f6f6,#e8e8e8);border-bottom:1px solid #d4d4d4"></div>
<div class="a" style="left:947px;top:149px;width:1px;height:10.6px;background:#cccccc;"></div>
<div class="t" style="left:749.00px;top:149.83px;font-size:9.3px;line-height:9.3px;color:#262626;">Item</div>
<div class="a" style="left:745.5px;top:149px;width:226.3px;height:10.6px;overflow:hidden">
<div class="t" style="left:205.50px;top:0.83px;font-size:9.3px;line-height:9.3px;color:#262626;">Detai</div>
</div>
<div class="a" style="left:745.5px;top:159.6px;width:217.5px;height:13.400000000000006px;background:#ffffff;"></div>
<div class="a" style="left:745.5px;top:173px;width:217.5px;height:16px;background:#f3f3f3;"></div>
<div class="a" style="left:745.5px;top:189px;width:217.5px;height:16px;background:#ffffff;"></div>
<div class="a" style="left:745.5px;top:205px;width:217.5px;height:16px;background:#f3f3f3;"></div>
<div class="a" style="left:745.5px;top:221px;width:217.5px;height:12.400000000000006px;background:#ffffff;"></div>
<div class="a" style="left:963px;top:159.6px;width:9px;height:82.4px;background:#efefef;"></div>
<div class="a" style="left:963.5px;top:159.6px;width:8px;height:12.4px;background:#dadada;"></div>
<div class="a" style="left:753px;top:174px;width:1px;height:59.400000000000006px;background:repeating-linear-gradient(#9a9a9a 0 1px,transparent 1px 2px)"></div>
<div class="a" style="left:769px;top:190px;width:1px;height:43.400000000000006px;background:repeating-linear-gradient(#9a9a9a 0 1px,transparent 1px 2px)"></div>
<div class="a" style="left:785px;top:190px;width:1px;height:43.400000000000006px;background:repeating-linear-gradient(#9a9a9a 0 1px,transparent 1px 2px)"></div>
<div class="a" style="left:786px;top:197px;width:5px;height:1px;background:repeating-linear-gradient(90deg,#9a9a9a 0 1px,transparent 1px 2px)"></div>
<div class="a" style="left:786px;top:213px;width:5px;height:1px;background:repeating-linear-gradient(90deg,#9a9a9a 0 1px,transparent 1px 2px)"></div>
<div class="a" style="left:786px;top:229px;width:5px;height:1px;background:repeating-linear-gradient(90deg,#9a9a9a 0 1px,transparent 1px 2px)"></div>
<div class="a" style="left:750.2px;top:166px;width:6.6px;height:1px;background:#8a8a8a;"></div>
<div class="a" style="left:764.9px;top:181px;width:8px;height:1px;background:#8a8a8a;"></div>
<svg style="left:780.7px;top:177.5px;" width="13" height="8" viewBox="0 0 13 8"><path d="M0.6 4Q6.5 -2.3 12.4 4Q6.5 10.3 0.6 4z" fill="#9ccbff" stroke="#1d7ff5" stroke-width="1.7"/><circle cx="6.5" cy="4" r="3.1" fill="#0f74f4"/></svg>
<svg style="left:796.4px;top:193.5px;" width="13" height="8" viewBox="0 0 13 8"><path d="M0.6 4Q6.5 -2.3 12.4 4Q6.5 10.3 0.6 4z" fill="#9ccbff" stroke="#1d7ff5" stroke-width="1.7"/><circle cx="6.5" cy="4" r="3.1" fill="#0f74f4"/></svg>
<svg style="left:796.4px;top:209.5px;" width="13" height="8" viewBox="0 0 13 8"><path d="M0.6 4Q6.5 -2.3 12.4 4Q6.5 10.3 0.6 4z" fill="#9ccbff" stroke="#1d7ff5" stroke-width="1.7"/><circle cx="6.5" cy="4" r="3.1" fill="#0f74f4"/></svg>
<svg style="left:796.4px;top:225.5px;" width="13" height="8" viewBox="0 0 13 8"><path d="M0.6 4Q6.5 -2.3 12.4 4Q6.5 10.3 0.6 4z" fill="#9ccbff" stroke="#1d7ff5" stroke-width="1.7"/><circle cx="6.5" cy="4" r="3.1" fill="#0f74f4"/></svg>
<svg style="left:765px;top:161px;" width="10" height="10" viewBox="0 0 10 10"><g fill="none" stroke="#3d8ef2" stroke-width="0.9"><path d="M3 1.5L0.5 7h5z"/><rect x="4.5" y="0.5" width="5" height="5"/><circle cx="5" cy="6.5" r="2.5"/></g></svg>
<div class="t" style="left:779.50px;top:162.33px;font-size:9.3px;line-height:9.3px;color:#1e1e1e;">Model Sets</div>
<div class="t" style="left:951.50px;top:162.33px;font-size:9.3px;line-height:9.3px;color:#1e1e1e;">-</div>
<svg style="left:801px;top:176.5px;" width="10" height="10" viewBox="0 0 10 10"><g fill="none" stroke="#9a9a9a" stroke-width="0.9"><path d="M3 1.5L0.5 7h5z"/><rect x="4.5" y="0.5" width="5" height="5"/><circle cx="5" cy="6.5" r="2.5"/></g></svg>
<div class="t" style="left:816.00px;top:177.83px;font-size:9.3px;line-height:9.3px;color:#1e1e1e;">ToyTrain-01</div>
<div class="t" style="left:951.50px;top:177.83px;font-size:9.3px;line-height:9.3px;color:#1e1e1e;">-</div>
<svg style="left:816.5px;top:192.5px;" width="10" height="10" viewBox="0 0 10 10"><g fill="none" stroke="#9a9a9a" stroke-width="0.9"><path d="M3 1.5L0.5 7.5h5.5z"/><path d="M5 0.5h4.5v6"/></g></svg>
<div class="t" style="left:832.00px;top:193.63px;font-size:9.3px;line-height:9.3px;color:#1e1e1e;">Cabin_FireRed</div>
<div class="t" style="left:951.00px;top:193.63px;font-size:9.3px;line-height:9.3px;color:#1e1e1e;">Ha</div>
<svg style="left:816.5px;top:208.5px;" width="10" height="10" viewBox="0 0 10 10"><g fill="none" stroke="#9a9a9a" stroke-width="0.9"><path d="M3 1.5L0.5 7.5h5.5z"/><path d="M5 0.5h4.5v6"/></g></svg>
<div class="t" style="left:832.00px;top:209.63px;font-size:9.3px;line-height:9.3px;color:#1e1e1e;">Boiler_LightBlue</div>
<div class="t" style="left:951.00px;top:209.63px;font-size:9.3px;line-height:9.3px;color:#1e1e1e;">Ha</div>
<svg style="left:816.5px;top:224.5px;" width="10" height="10" viewBox="0 0 10 10"><g fill="none" stroke="#9a9a9a" stroke-width="0.9"><path d="M3 1.5L0.5 7.5h5.5z"/><path d="M5 0.5h4.5v6"/></g></svg>
<div class="t" style="left:832.00px;top:225.63px;font-size:9.3px;line-height:9.3px;color:#1e1e1e;">Dome_DeepOrange</div>
<div class="t" style="left:951.00px;top:225.63px;font-size:9.3px;line-height:9.3px;color:#1e1e1e;">Ha</div>
<div class="a" style="left:745.5px;top:233.4px;width:226.5px;height:8.6px;background:#efefef;"></div>
<div class="a" style="left:745.5px;top:233.8px;width:183.5px;height:7.8px;background:#dadada;"></div>
<div class="a" style="left:972.8px;top:148px;width:7.2px;height:95px;background:#f9f9f9;"></div>
<div class="a" style="left:972px;top:148px;width:1px;height:95px;background:#aaaaaa;"></div>
<div class="a" style="left:738.3px;top:177.0px;width:3.4px;height:3.4px;background:#8c8c8c;border-radius:50%"></div>
<div class="a" style="left:738.3px;top:183.3px;width:3.4px;height:3.4px;background:#8c8c8c;border-radius:50%"></div>
<div class="a" style="left:738.3px;top:189.60000000000002px;width:3.4px;height:3.4px;background:#8c8c8c;border-radius:50%"></div>
<div class="a" style="left:846.9px;top:245.1px;width:4px;height:4px;background:#8e8e8e;border-radius:50%"></div>
<div class="a" style="left:853.1px;top:245.1px;width:4px;height:4px;background:#8e8e8e;border-radius:50%"></div>
<div class="a" style="left:859.3000000000001px;top:245.1px;width:4px;height:4px;background:#8e8e8e;border-radius:50%"></div>
<div class="t" style="left:816.70px;top:252.43px;font-size:9.3px;line-height:9.3px;color:#262626;">Scene</div>
<div class="t" style="left:852.60px;top:252.43px;font-size:9.3px;line-height:9.3px;color:#262626;">Materials</div>
<div class="a" style="left:811.8px;top:264.6px;width:83px;height:1px;background:#dcdcdc;"></div>
<div class="a" style="left:811.8px;top:264.7px;width:35.9px;height:1.8px;background:#1f7cf5;"></div>
<div class="t" style="left:762.00px;top:291.03px;font-size:10.6px;line-height:10.6px;color:#1a1a1a;font-weight:bold;">Scene Information</div>
<div class="t" style="left:762.00px;top:312.21px;font-size:9.2px;line-height:9.2px;color:#262626;">Name:</div>
<div class="t" style="left:762.00px;top:332.31px;font-size:9.2px;line-height:9.2px;color:#262626;">Units:</div>
<div class="t" style="left:817.30px;top:332.31px;font-size:9.2px;line-height:9.2px;color:#262626;">Meter</div>
<div class="t" style="left:762.00px;top:348.81px;font-size:9.2px;line-height:9.2px;color:#262626;">Parts:</div>
<div class="t" style="left:817.30px;top:348.81px;font-size:9.2px;line-height:9.2px;color:#262626;">77</div>
<div class="t" style="left:762.00px;top:365.51px;font-size:9.2px;line-height:9.2px;color:#262626;">Triangles:</div>
<div class="t" style="left:817.30px;top:365.51px;font-size:9.2px;line-height:9.2px;color:#262626;">1.711.610</div>
<div class="t" style="left:762.00px;top:381.91px;font-size:9.2px;line-height:9.2px;color:#262626;">Materials:</div>
<div class="t" style="left:817.30px;top:381.91px;font-size:9.2px;line-height:9.2px;color:#262626;">22</div>
<div class="t" style="left:762.00px;top:398.11px;font-size:9.2px;line-height:9.2px;color:#262626;">Model Sets:</div>
<div class="t" style="left:817.30px;top:398.11px;font-size:9.2px;line-height:9.2px;color:#262626;">1</div>
<div class="a" style="left:817.2px;top:308.7px;width:130.3px;height:14px;background:#fff;border:1px solid #b4b4b4"></div>
<div class="t" style="left:820.00px;top:312.13px;font-size:9.3px;line-height:9.3px;color:#1e1e1e;">toy-train1.bip</div>
<div class="a" style="left:948.4px;top:279.9px;width:8.4px;height:124.7px;background:#f0f0f0;"></div>
<div class="a" style="left:948.4px;top:279.9px;width:8.4px;height:113.8px;background:#dcdcdc;"></div>
<div class="a" style="left:44px;top:428px;width:936px;height:40px;background:#fafafa;border-top:1px solid #dedede"></div>
<div class="a" style="left:51.8px;top:435.8px;width:1.3px;height:1.3px;background:#8c8c8c;border-radius:50%"></div>
<div class="a" style="left:51.8px;top:440.65000000000003px;width:1.3px;height:1.3px;background:#8c8c8c;border-radius:50%"></div>
<div class="a" style="left:51.8px;top:445.5px;width:1.3px;height:1.3px;background:#8c8c8c;border-radius:50%"></div>
<div class="a" style="left:51.8px;top:450.35px;width:1.3px;height:1.3px;background:#8c8c8c;border-radius:50%"></div>
<div class="a" style="left:51.8px;top:455.2px;width:1.3px;height:1.3px;background:#8c8c8c;border-radius:50%"></div>
<svg style="left:80px;top:435.5px;" width="15" height="13" viewBox="0 0 15 13"><path d="M3.6 11.2A2.6 2.6 0 0 1 1.6 6.6 2.4 2.4 0 0 1 3.8 3.4 3.4 3.4 0 0 1 9.6 2.6 2.6 2.6 0 0 1 12.4 5.4 2.9 2.9 0 0 1 11.6 11.2z" fill="none" stroke="#777" stroke-width="0.9"/><circle cx="7.3" cy="7.2" r="2.3" fill="none" stroke="#777" stroke-width="1" stroke-dasharray="1.2 0.6"/><circle cx="7.3" cy="7.2" r="1" fill="#777"/></svg>
<div class="t" style="left:59.50px;top:452.63px;font-size:9.3px;line-height:9.3px;color:#262626;">Cloud Library</div>
<div class="a" style="left:385px;top:430px;width:63.30000000000001px;height:36px;background:#e4f0fd;border:1px solid #bfdafb"></div>
<div class="a" style="left:385px;top:464.2px;width:63.30000000000001px;height:1.8px;background:#1f7cf5;"></div>
<div class="a" style="left:451.8px;top:430px;width:63.19999999999999px;height:36px;background:#e4f0fd;border:1px solid #bfdafb"></div>
<div class="a" style="left:451.8px;top:464.2px;width:63.19999999999999px;height:1.8px;background:#1f7cf5;"></div>
<svg style="left:342px;top:434.8px;" width="16" height="16" viewBox="0 0 16 16"><circle cx="6.4" cy="6.6" r="5.4" fill="none" stroke="#777" stroke-width="1.1"/><path d="M6.4 0v5" stroke="#6a6a6a" stroke-width="1.3"/><path d="M3.9 4.2h5L6.4 8z" fill="#6a6a6a"/><circle cx="11.4" cy="10.7" r="3.6" fill="#fafafa" stroke="#777" stroke-width="1"/><path d="M9.5 10.7h3.8M11.4 9.4v2.6" stroke="#6a6a6a" stroke-width="1"/></svg>
<div class="t" style="left:290.00px;width:120px;text-align:center;top:452.63px;font-size:9.3px;line-height:9.3px;color:#262626;">Import</div>
<svg style="left:407px;top:432.5px;" width="18" height="16" viewBox="0 0 18 16"><path d="M0.5 0.5l3 0.2-2.5 2.5z" fill="#222"/><path d="M2.2 4.5Q5.5 3.5 8.5 5Q11.5 3.5 14.8 4.5V14Q11.5 13 8.5 14.5Q5.5 13 2.2 14z" fill="#fff" stroke="#1a78f2" stroke-width="1.3"/><path d="M8.5 5v9.5" stroke="#1a78f2" stroke-width="1.1"/></svg>
<div class="t" style="left:356.60px;width:120px;text-align:center;top:452.63px;font-size:9.3px;line-height:9.3px;color:#262626;">Library</div>
<svg style="left:474px;top:432.5px;" width="18" height="16" viewBox="0 0 18 16"><path d="M0.5 0.5l3 0.2-2.5 2.5z" fill="#222"/><rect x="3" y="4" width="11.5" height="11" rx="1.3" fill="#fff" stroke="#1a78f2" stroke-width="1.3"/><path d="M5.5 7h6.5M5.5 9.5h6.5M5.5 12h6.5" stroke="#1a78f2" stroke-width="1.1"/><path d="M15 6v1.5M15 9v1.5M15 12v1.5" stroke="#1a78f2" stroke-width="1.2"/></svg>
<div class="t" style="left:423.40px;width:120px;text-align:center;top:452.63px;font-size:9.3px;line-height:9.3px;color:#262626;">Project</div>
<svg style="left:543.3px;top:435.6px;" width="14" height="14" viewBox="0 0 14 14"><path d="M3 2.2A5.8 5.8 0 1 1 1.2 7" fill="none" stroke="#737373" stroke-width="1.4"/><path d="M0.2 1.5l3.8-0.2-0.8 3.5z" fill="#777"/><path d="M5.3 4.3v5.4l4.3-2.7z" fill="#6a6a6a"/></svg>
<div class="t" style="left:490.10px;width:120px;text-align:center;top:452.63px;font-size:9.3px;line-height:9.3px;color:#262626;">Animation</div>
<svg style="left:609.5px;top:435px;" width="15" height="16" viewBox="0 0 15 16"><g fill="none" stroke="#777" stroke-width="1"><path d="M7.5 1L12 3.3v5L7.5 10.6 3 8.3v-5z"/><path d="M3 3.3l4.5 2.3 4.5-2.3M7.5 5.6v5"/><path d="M1.5 7Q0 11 5 13M13.5 7Q15 11 10 13"/></g><path d="M4 12l2.5 1.5-2 1.5z" fill="#777"/></svg>
<div class="t" style="left:557.00px;width:120px;text-align:center;top:452.63px;font-size:9.3px;line-height:9.3px;color:#262626;">KeyShotXR</div>
<svg style="left:676px;top:435.2px;" width="16" height="15" viewBox="0 0 16 15"><g fill="none" stroke="#777" stroke-width="1"><rect x="0.5" y="2.5" width="12" height="9"/><circle cx="6" cy="7" r="2.6"/><path d="M3.5 2.5l0.7-1.6h4l0.7 1.6"/></g><circle cx="11.5" cy="10.5" r="3.6" fill="#f7f7f7" stroke="#777" stroke-width="1"/><path d="M9.8 10.5l1.3 1.3 2.2-2.4" fill="none" stroke="#666" stroke-width="1"/></svg>
<div class="t" style="left:623.70px;width:120px;text-align:center;top:452.63px;font-size:9.3px;line-height:9.3px;color:#262626;">Render</div>
<svg style="left:937.5px;top:434.5px;" width="16" height="16" viewBox="0 0 16 16"><path d="M1 3.6V1H3.6M7.4 1H10V3.6M1 7.4V10H3.6M4.7 1h1.6M1 4.7v1.6M10 4.7v1" fill="none" stroke="#7a7a7a" stroke-width="1"/><circle cx="11" cy="11" r="3.3" fill="#fafafa" stroke="#777" stroke-width="0.9"/><path d="M11 6.8v8.4M6.8 11h8.4" stroke="#777" stroke-width="0.9"/></svg>
<div class="t" style="left:921.70px;top:452.63px;font-size:9.3px;line-height:9.3px;color:#262626;">Screenshot</div>
<div class="a" style="left:44px;top:43px;width:1px;height:425px;background:#a4a4a4;"></div>
</body></html>
